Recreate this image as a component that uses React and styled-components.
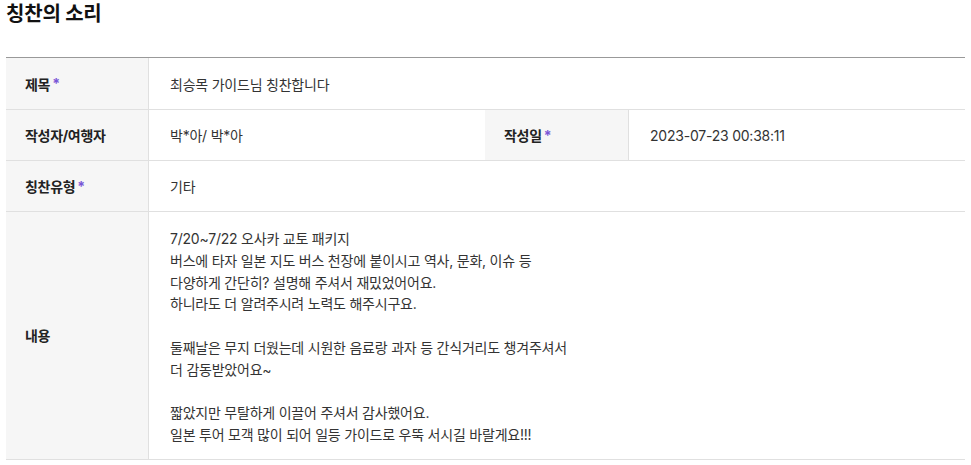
import React from "react";
import styled, { createGlobalStyle } from "styled-components";

const GlobalStyle = createGlobalStyle`
  body {
    margin: 0;
    background: #fff;
    font-family: Inter, "Noto Sans CJK KR", sans-serif;
    color: #222;
  }
`;

const Page = styled.div`
  padding: 0 6px;
`;

const Title = styled.h2`
  margin: 0;
  padding-top: 1px;
  font-size: 20px;
  line-height: 26px;
  font-weight: 700;
  letter-spacing: -0.2px;
  color: #111;
`;

const Table = styled.div`
  margin-top: 30px;
  border-top: 1px solid #999;
  display: grid;
  grid-template-columns: 143px 336px 144px 1fr;
`;

const Label = styled.div`
  background: #f6f6f6;
  border-bottom: 1px solid #e0e0e0;
  border-right: 1px solid #e0e0e0;
  padding: 0 19px;
  display: flex;
  align-items: center;
  font-size: 14px;
  font-weight: 700;
  letter-spacing: -0.3px;
  color: #222;
  min-height: ${(p) => (p.$tall ? "51px" : "50px")};
`;

const Star = styled.span`
  color: #7a56d6;
  margin-left: 2px;
  font-weight: 700;
`;

const Value = styled.div`
  grid-column: ${(p) => p.$span || "auto"};
  border-bottom: 1px solid #e0e0e0;
  padding: ${(p) => (p.$multi ? "16px 21px 13px" : "0 21px")};
  display: flex;
  align-items: center;
  font-size: 14px;
  letter-spacing: -0.22px;
  color: #333;
  min-height: ${(p) => (p.$tall ? "51px" : "50px")};
`;

const Body = styled.div`
  line-height: 21.8px;
  white-space: pre-line;
`;

const content = `7/20~7/22 오사카 교토 패키지
버스에 타자 일본 지도 버스 천장에 붙이시고 역사, 문화, 이슈 등
다양하게 간단히? 설명해 주셔서 재밌었어어요.
하니라도 더 알려주시려 노력도 해주시구요.

둘째날은 무지 더웠는데 시원한 음료랑 과자 등 간식거리도 챙겨주셔서
더 감동받았어요~

짧았지만 무탈하게 이끌어 주셔서 감사했어요.
일본 투어 모객 많이 되어 일등 가이드로 우뚝 서시길 바랄게요!!!`;

export default function App() {
  return (
    <>
      <GlobalStyle />
      <Page>
        <Title>칭찬의 소리</Title>
        <Table>
          <Label $tall>
            제목<Star>*</Star>
          </Label>
          <Value $span="2 / 5" $tall>
            최승목 가이드님 칭찬합니다
          </Value>

          <Label>작성자/여행자</Label>
          <Value>박*아/ 박*아</Value>
          <Label>
            작성일<Star>*</Star>
          </Label>
          <Value>2023-07-23 00:38:11</Value>

          <Label>
            칭찬유형<Star>*</Star>
          </Label>
          <Value $span="2 / 5">기타</Value>

          <Label>내용</Label>
          <Value $span="2 / 5" $multi>
            <Body>{content}</Body>
          </Value>
        </Table>
      </Page>
    </>
  );
}
